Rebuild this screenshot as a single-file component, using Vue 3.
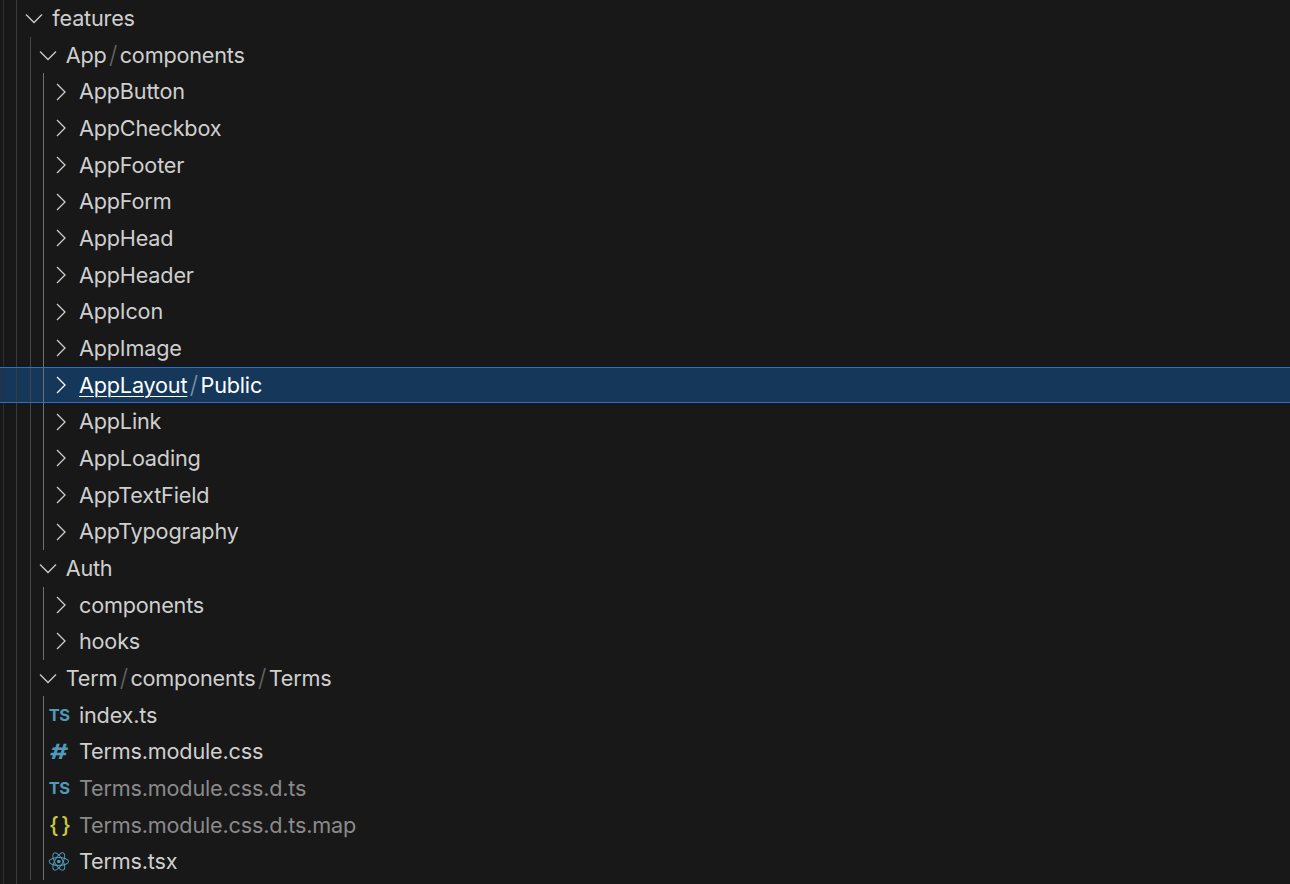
<script setup>
const rows = [
  { depth: 2, open: true, parts: ['features'] },
  { depth: 3, open: true, parts: ['App', 'components'] },
  ...['AppButton', 'AppCheckbox', 'AppFooter', 'AppForm', 'AppHead', 'AppHeader', 'AppIcon', 'AppImage'].map((n) => ({ depth: 4, closed: true, parts: [n] })),
  { depth: 4, closed: true, parts: ['AppLayout', 'Public'], selected: true },
  ...['AppLink', 'AppLoading', 'AppTextField', 'AppTypography'].map((n) => ({ depth: 4, closed: true, parts: [n] })),
  { depth: 3, open: true, parts: ['Auth'] },
  { depth: 4, closed: true, parts: ['components'] },
  { depth: 4, closed: true, parts: ['hooks'] },
  { depth: 3, open: true, parts: ['Term', 'components', 'Terms'] },
  { depth: 4, icon: 'ts', parts: ['index.ts'] },
  { depth: 4, icon: 'hash', parts: ['Terms.module.css'] },
  { depth: 4, icon: 'ts', dim: true, parts: ['Terms.module.css.d.ts'] },
  { depth: 4, icon: 'json', dim: true, parts: ['Terms.module.css.d.ts.map'] },
  { depth: 4, icon: 'react', parts: ['Terms.tsx'] },
]
</script>

<template>
  <div class="tree">
    <div
      v-for="(row, i) in rows"
      :key="i"
      class="row"
      :class="{ selected: row.selected, dim: row.dim }"
    >
      <span v-for="d in row.depth" :key="d" class="guide" :class="'g' + d"></span>
      <span class="twistie">
        <svg v-if="row.open" width="18" height="18" viewBox="0 0 18 18" fill="none">
          <path d="M1 5.5 L9 13.5 L17 5.5" stroke="currentColor" stroke-width="1.3" />
        </svg>
        <svg v-else-if="row.closed" width="18" height="18" viewBox="0 0 18 18" fill="none">
          <path d="M5 1 L13 9 L5 17" stroke="currentColor" stroke-width="1.3" />
        </svg>
        <span v-else-if="row.icon === 'ts'" class="ficon ts">TS</span>
        <span v-else-if="row.icon === 'hash'" class="ficon hash">#</span>
        <span v-else-if="row.icon === 'json'" class="ficon json">{ }</span>
        <svg v-else-if="row.icon === 'react'" class="ficon" width="21" height="21" viewBox="0 0 22 22" fill="none" stroke="#519aba" stroke-width="1.05">
          <ellipse cx="11" cy="11" rx="10.2" ry="4.2" />
          <ellipse cx="11" cy="11" rx="10.2" ry="4.2" transform="rotate(60 11 11)" />
          <ellipse cx="11" cy="11" rx="10.2" ry="4.2" transform="rotate(120 11 11)" />
          <circle cx="11" cy="11" r="1.9" fill="#519aba" stroke="none" />
        </svg>
      </span>
      <span class="label">
        <template v-for="(p, j) in row.parts" :key="j">
          <span v-if="j > 0" class="sep">/</span>
          <span :class="{ focus: row.selected && j === 0 }">{{ p }}</span>
        </template>
      </span>
    </div>
    <div class="row tail">
      <span class="guide g1"></span>
      <span class="guide g2"></span>
    </div>
  </div>
</template>

<style>
html, body { background: #181818; overflow: hidden; }
</style>

<style scoped>
.tree {
  width: 1290px;
  height: 884px;
  overflow: hidden;
  background: #181818;
  color: #cfcfcf;
  font-family: Inter, "Liberation Sans", sans-serif;
  font-size: 21.67px;
  letter-spacing: -0.2px;
  box-sizing: border-box;
}
.row {
  display: flex;
  align-items: stretch;
  height: 36.667px;
  padding-left: 3px;
  box-sizing: border-box;
  white-space: nowrap;
}
.row.tail { height: 4px; }
.row.selected {
  background: #14375a;
  border-top: 1px solid #2f6fc6;
  border-bottom: 1px solid #2f6fc6;
  color: #ffffff;
}
.row.dim .label { color: #8a8a8a; }
.guide {
  width: 13.33px;
  flex: none;
  box-sizing: border-box;
}
.g1 { border-left: 1px solid #2f2f2f; }
.g2 { border-left: 1px solid #3a3a3a; }
.g3 { border-left: 1px solid #474747; }
.g4 { border-left: 1px solid #707070; }
.twistie {
  width: 26.67px;
  flex: none;
  display: flex;
  align-items: center;
  justify-content: center;
  margin-left: -8.8px;
  margin-right: 4.8px;
  color: #cccccc;
}
.selected .twistie { color: #ffffff; }
.ficon {
  font-weight: 700;
  letter-spacing: 0;
  line-height: 1;
  transform: translateX(-1.7px);
}
.ts { color: #519aba; font-size: 16.5px; letter-spacing: -0.4px; }
.hash {
  color: #519aba;
  font-size: 21px;
  transform: translateX(-1.7px) scaleX(1.3) skewX(-5deg);
}
.json { color: #cbcb41; font-size: 22px; font-weight: 500; letter-spacing: -1.6px; }
.label {
  display: flex;
  align-items: center;
  padding-bottom: 0.5px;
}
.sep {
  margin: 0 2.5px;
  color: #666666;
  font-size: 24px;
  font-weight: 300;
  line-height: 1;
}
.selected .sep { color: #7f93a8; }
.focus {
  text-decoration: underline;
  text-underline-offset: 3px;
  text-decoration-thickness: 1.3px;
}
</style>
